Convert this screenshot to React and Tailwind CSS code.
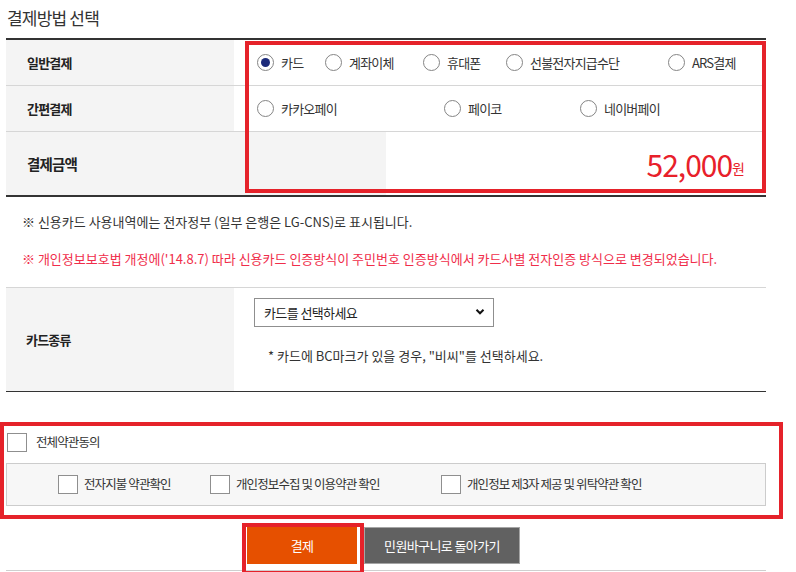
import React, { useState } from 'react';

const Radio = ({ label, checked, onClick, width }) => (
  <div className={`flex items-center shrink-0 ${width}`} onClick={onClick}>
    <span className="w-[17px] h-[17px] rounded-full border border-[#858585] bg-white flex items-center justify-center">
      {checked && <span className="w-[9px] h-[9px] rounded-full bg-[#1b2a7a]" />}
    </span>
    <span className="ml-[7px] text-[13px] tracking-[-0.8px] text-[#333]">{label}</span>
  </div>
);

const Check = ({ label, width }) => (
  <div className={`flex items-center shrink-0 ${width}`}>
    <span className="w-[20px] h-[19px] border border-[#8f8f8f] bg-white" />
    <span className="ml-[6px] text-[12.5px] tracking-[-0.9px] text-[#333]">{label}</span>
  </div>
);

const App = () => {
  const [method, setMethod] = useState("카드");

  return (
    <div className="relative w-[796px] h-[572px] overflow-hidden bg-white text-[#333] font-['Noto_Sans_CJK_KR','Noto_Sans',sans-serif]">
      <div className="ml-[6px] w-[760px]">
        {/* title */}
        <h2 className="h-[38px] pl-[1px] pt-[5px] text-[17px] leading-[26px] tracking-[-0.8px] font-normal">결제방법 선택</h2>

        {/* payment table */}
        <div className="border-t-2 border-[#333]">
          <div className="flex h-[46px] border-b border-[#d6d6d6]">
            <div className="w-[228px] bg-[#f4f4f4] pl-[21px] flex items-center text-[13px] font-bold tracking-[-0.8px] text-[#222]">일반결제</div>
            <div className="flex items-center pl-[23px]">
              {[
                ["카드", "w-[68px]"],
                ["계좌이체", "w-[98px]"],
                ["휴대폰", "w-[83px]"],
                ["선불전자지급수단", "w-[162px]"],
                ["ARS결제", ""],
              ].map(([l, w]) => (
                <Radio key={l} label={l} width={w} checked={method === l} onClick={() => setMethod(l)} />
              ))}
            </div>
          </div>
          <div className="flex h-[46px] border-b border-[#d6d6d6]">
            <div className="w-[228px] bg-[#f4f4f4] pl-[21px] flex items-center text-[13px] font-bold tracking-[-0.8px] text-[#222]">간편결제</div>
            <div className="flex items-center pl-[23px]">
              {[
                ["카카오페이", "w-[187px]"],
                ["페이코", "w-[136px]"],
                ["네이버페이", ""],
              ].map(([l, w]) => (
                <Radio key={l} label={l} width={w} checked={method === l} onClick={() => setMethod(l)} />
              ))}
            </div>
          </div>
          <div className="flex h-[65px] border-b-2 border-[#333]">
            <div className="w-[380px] bg-[#f4f4f4] pl-[21px] flex items-center text-[14.5px] font-bold tracking-[-0.8px] text-[#222]">결제금액</div>
            <div className="flex-1 flex items-center justify-end pr-[21px]">
              <span className="text-[30px] leading-[36px] tracking-[-1px] text-[#e8202a]">52,000</span>
              <span className="text-[14px] mt-[10px] text-[#e8202a]">원</span>
            </div>
          </div>
        </div>

        {/* notices */}
        <div className="h-[90px] pl-[16px] pt-[15px] text-[13px] leading-[20px] tracking-[0px]">
          <p className="text-[#333]">※ 신용카드 사용내역에는 전자정부 (일부 은행은 LG-CNS)로 표시됩니다.</p>
          <p className="mt-[17px] text-[#f02d4a]">※ 개인정보보호법 개정에('14.8.7) 따라 신용카드 인증방식이 주민번호 인증방식에서 카드사별 전자인증 방식으로 변경되었습니다.</p>
        </div>

        {/* card type */}
        <div className="flex h-[105px] border-t border-[#d6d6d6] border-b border-b-[#333]">
          <div className="w-[228px] bg-[#f4f4f4] pl-[20px] flex items-center text-[13px] font-bold tracking-[-0.8px] text-[#222]">카드종류</div>
          <div className="pl-[20px] pt-[10px]">
            <div className="relative w-[240px] h-[29px]">
              <select className="appearance-none w-full h-full border border-[#8f8f8f] bg-white pl-[9px] text-[13px] tracking-[-0.6px] text-[#222] outline-none">
                <option>카드를 선택하세요</option>
                <option>비씨</option>
                <option>국민</option>
                <option>신한</option>
              </select>
              <svg className="absolute right-[9px] top-[10px] w-[10px] h-[8px] pointer-events-none" viewBox="0 0 10 8">
                <path d="M1.5 1.8 L5 5.3 L8.5 1.8" fill="none" stroke="#111" strokeWidth="2" />
              </svg>
            </div>
            <p className="mt-[19px] pl-[14px] text-[13px] leading-[20px] tracking-[0px] text-[#333]">* 카드에 BC마크가 있을 경우, "비씨"를 선택하세요.</p>
          </div>
        </div>

        {/* agreements */}
        <div className="mt-[41px]">
          <div className="flex items-center ml-[1px]">
            <span className="w-[20px] h-[19px] border border-[#8f8f8f] bg-white" />
            <span className="ml-[9px] text-[12.5px] tracking-[-0.9px] text-[#333]">전체약관동의</span>
          </div>
          <div className="mt-[11px] h-[43px] border border-[#cccccc] bg-[#f7f7f7] flex items-center pl-[51px]">
            <Check label="전자지불 약관확인" width="w-[152px]" />
            <Check label="개인정보수집 및 이용약관 확인" width="w-[231px]" />
            <Check label="개인정보 제3자 제공 및 위탁약관 확인" width="" />
          </div>
        </div>

        {/* buttons */}
        <div className="mt-[21px] flex gap-[7px] pl-[241px]">
          <button className="w-[110px] h-[37px] bg-[#e65000] text-white text-[13px] tracking-[-0.6px]">결제</button>
          <button className="w-[156px] h-[37px] bg-[#616161] border border-[#a5a5a5] text-white text-[13px] tracking-[-0.6px]">민원바구니로 돌아가기</button>
        </div>
        <div className="mt-[6px] border-t border-[#cfcfcf]" />
      </div>

      {/* red highlight boxes */}
      <div className="absolute left-[245px] top-[41px] w-[521px] h-[152px] border-4 border-[#e5222a] pointer-events-none" />
      <div className="absolute left-0 top-[422px] w-[783px] h-[97px] border-4 border-[#e5222a] pointer-events-none" />
      <div className="absolute left-[242px] top-[523px] w-[122px] h-[52px] border-4 border-[#e5222a] pointer-events-none" />
    </div>
  );
};

export default App;
